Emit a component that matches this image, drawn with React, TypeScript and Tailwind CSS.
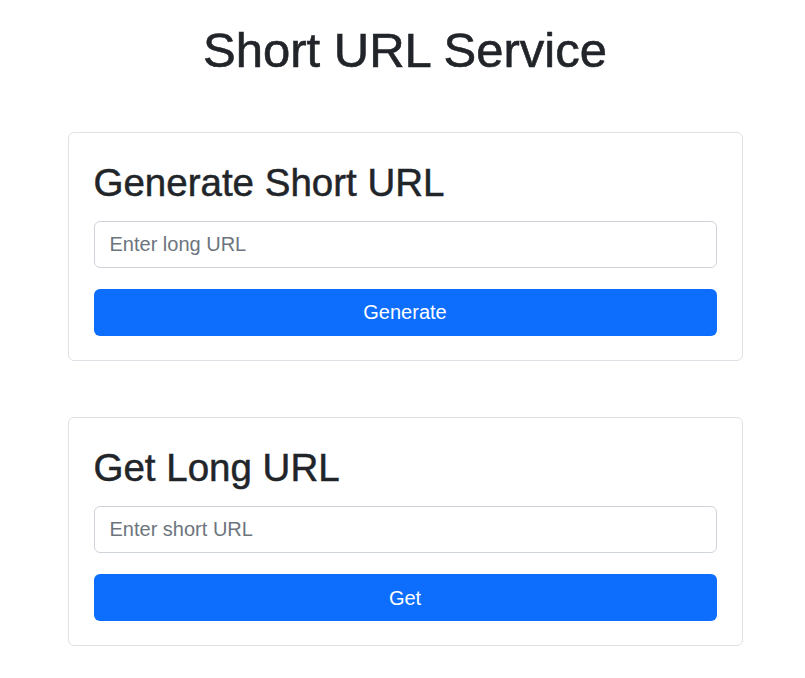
import { useState } from 'react'

function UrlCard({
  title,
  placeholder,
  action,
}: {
  title: string
  placeholder: string
  action: string
}) {
  const [value, setValue] = useState('')

  return (
    <div className="w-[675px] rounded-[6px] border border-[#dee2e6] bg-white px-[25px] pt-[27px] pb-[24px]">
      <h2 className="mb-[15px] text-[38.5px] leading-[1.2] font-medium text-[#212529] [-webkit-text-stroke:0.5px_#212529]">
        {title}
      </h2>
      <input
        type="text"
        value={value}
        onChange={(e) => setValue(e.target.value)}
        placeholder={placeholder}
        className="block h-[47px] w-full rounded-[6px] border border-[#ced4da] bg-white px-[15px] text-[20px] text-[#212529] placeholder:text-[#6c757d] outline-none"
      />
      <button
        type="button"
        className="mt-[21px] block h-[47px] w-full rounded-[6px] bg-[#0d6efd] text-[20px] text-white hover:bg-[#0b5ed7]"
      >
        {action}
      </button>
    </div>
  )
}

export default function App() {
  return (
    <div className="min-h-screen bg-white pl-[5px] font-['Liberation_Sans',Arial,sans-serif] text-[#212529]">
      <div className="mx-auto flex w-[675px] flex-col items-center pt-[21px] pb-[40px]">
        {/* Header */}
        <h1 className="text-center text-[49px] leading-[1.2] font-medium [-webkit-text-stroke:0.6px_#212529]">
          Short URL Service
        </h1>

        {/* Cards */}
        <div className="mt-[52px] flex flex-col gap-[56px]">
          <UrlCard title="Generate Short URL" placeholder="Enter long URL" action="Generate" />
          <UrlCard title="Get Long URL" placeholder="Enter short URL" action="Get" />
        </div>
      </div>
    </div>
  )
}
